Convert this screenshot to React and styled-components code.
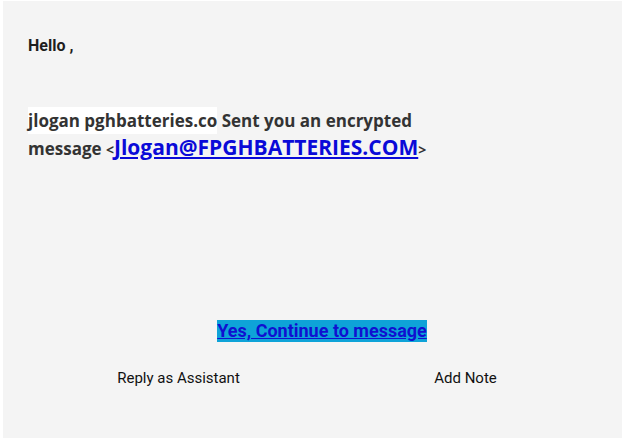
import React from "react";
import styled, { createGlobalStyle } from "styled-components";

const Global = createGlobalStyle`
  html, body { margin: 0; padding: 0; background: #ffffff; }
  body { width: 622px; height: 441px; overflow: hidden; }
`;

const Page = styled.div`
  padding: 1px 0 3px 3px;
  box-sizing: border-box;
  height: 441px;
`;

const Panel = styled.div`
  background: #f4f4f4;
  height: 100%;
  box-sizing: border-box;
  padding: 36px 6px 0 25px;
  display: flex;
  flex-direction: column;
`;

const Greeting = styled.div`
  font-family: Roboto, "Liberation Sans", sans-serif;
  font-weight: 700;
  font-size: 16px;
  line-height: 18px;
  color: #1e1e1e;
`;

const Message = styled.div`
  margin-top: 52px;
  font-family: "Open Sans", "Liberation Sans", sans-serif;
  font-weight: 700;
  font-size: 17px;
  line-height: 27px;
  color: #333333;
  width: 400px;
`;

const Highlight = styled.span`
  background: #ffffff;
  padding: 2px 0;
`;

const Angle = styled.span`
  font-size: 14px;
`;

const Mail = styled.a`
  color: #0a0ad8;
  font-size: 21px;
  text-decoration: underline;
`;

const Actions = styled.div`
  margin-top: 157px;
  display: flex;
  flex-direction: column;
  align-items: center;
`;

const Continue = styled.a`
  background: #0ea3d8;
  color: #1010d0;
  font-family: Roboto, "Liberation Sans", sans-serif;
  font-weight: 700;
  font-size: 18px;
  line-height: 22px;
  text-decoration: underline;
`;

const Row = styled.div`
  margin-top: 27px;
  display: flex;
  width: 574px;
`;

const Cell = styled.div`
  flex: 1;
  text-align: center;
  font-family: Roboto, "Liberation Sans", sans-serif;
  font-size: 15px;
  line-height: 18px;
  color: #111111;
`;

export default function App() {
  return (
    <>
      <Global />
      <Page>
        <Panel>
          <Greeting>Hello ,</Greeting>
          <Message>
            <Highlight>jlogan pghbatteries.co</Highlight> Sent you an encrypted message{" "}
            <Angle>&lt;</Angle>
            <Mail href="#">Jlogan@FPGHBATTERIES.COM</Mail>
            <Angle>&gt;</Angle>
          </Message>
          <Actions>
            <Continue href="#">Yes, Continue to message</Continue>
            <Row>
              <Cell>Reply as Assistant</Cell>
              <Cell>Add Note</Cell>
            </Row>
          </Actions>
        </Panel>
      </Page>
    </>
  );
}
